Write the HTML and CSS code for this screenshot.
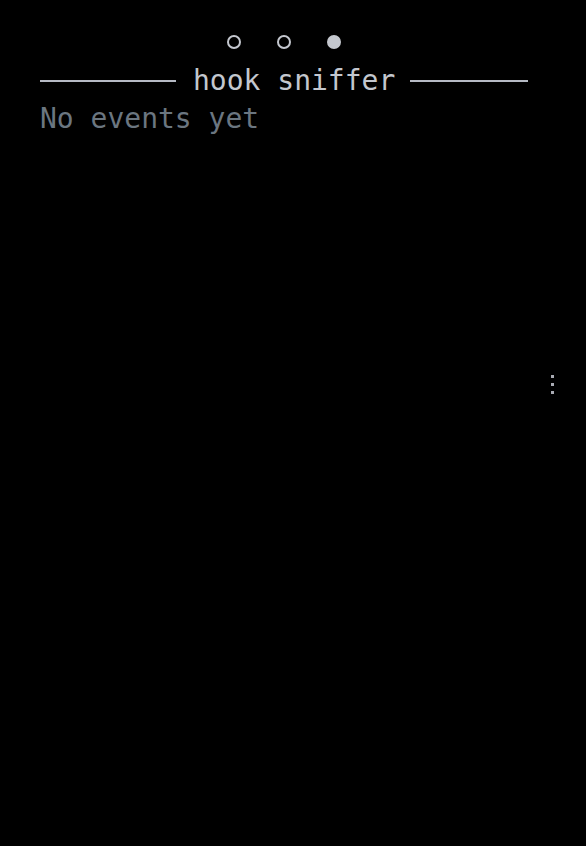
FILE: index.html
```html
<!DOCTYPE html>
<html>
<head>
<meta charset="utf-8">
<link rel="stylesheet" href="styles.css">
</head>
<body>
<div class="app">
  <main class="main">
    <div class="pager">
      <span class="dot"></span>
      <span class="dot"></span>
      <span class="dot active"></span>
    </div>
    <div class="title-row">
      <span class="rule left"></span>
      <span class="title">hook sniffer</span>
      <span class="rule right"></span>
    </div>
    <div class="empty">No events yet</div>
  </main>
  <div class="handle">
    <span></span><span></span><span></span>
  </div>
</div>
</body>
</html>
```
FILE: styles.css
```css
html, body {
  margin: 0;
  padding: 0;
  background: #000;
  height: 100%;
}
.app {
  position: relative;
  height: 100%;
  font-family: "DejaVu Sans Mono", "Liberation Mono", monospace;
  font-size: 28px;
  line-height: 38px;
}
.main {
  margin-left: 40px;
  width: 488px;
  padding-top: 35px;
}
.pager {
  display: flex;
  justify-content: center;
  gap: 36px;
  height: 14px;
  margin-bottom: 13px;
}
.dot {
  box-sizing: border-box;
  width: 14px;
  height: 14px;
  border-radius: 50%;
  border: 2px solid #c4c7ce;
}
.dot.active {
  background: #c4c7ce;
  border-color: #c4c7ce;
}
.title-row {
  display: flex;
  align-items: center;
  height: 38px;
}
.rule {
  height: 2px;
  background: #b6bac4;
}
.rule.left {
  width: 136px;
  margin-right: 17px;
}
.rule.right {
  flex: 1;
  margin-left: 15px;
}
.title {
  color: #c3c7ce;
  white-space: pre;
}
.empty {
  color: #6b7680;
}
.handle {
  position: absolute;
  top: 375px;
  left: 551px;
  display: flex;
  flex-direction: column;
  gap: 5px;
}
.handle span {
  width: 3px;
  height: 3px;
  background: #a9abb3;
}
```
